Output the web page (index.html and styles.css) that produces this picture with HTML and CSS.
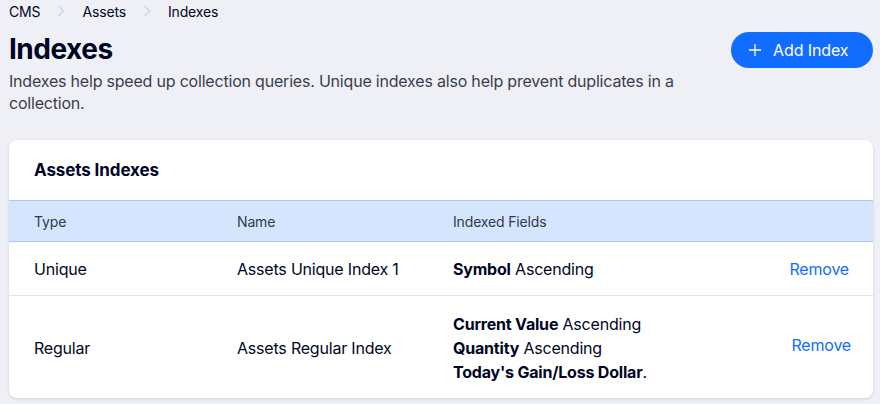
FILE: index.html
```html
<!DOCTYPE html>
<html lang="en">
<head>
    <meta charset="UTF-8">
    <meta name="viewport" content="width=device-width, initial-scale=1.0">
    <title>Indexes</title>
    <link rel="stylesheet" href="styles.css">
</head>
<body>
    <div class="page">
        <nav class="breadcrumbs">
            <span class="crumb">CMS</span>
            <svg class="chevron" width="8" height="14" viewBox="0 0 8 14"><path d="M1.5 2 L6.5 7 L1.5 12" fill="none" stroke="#b6bdcb" stroke-width="1"/></svg>
            <span class="crumb">Assets</span>
            <svg class="chevron" width="8" height="14" viewBox="0 0 8 14"><path d="M1.5 2 L6.5 7 L1.5 12" fill="none" stroke="#b6bdcb" stroke-width="1"/></svg>
            <span class="crumb current">Indexes</span>
        </nav>

        <div class="page-header">
            <div class="header-text">
                <h1 class="title">Indexes</h1>
                <p class="subtitle">Indexes help speed up collection queries. Unique indexes also help prevent duplicates in a collection.</p>
            </div>
            <button class="add-btn">
                <svg width="14" height="14" viewBox="0 0 14 14"><path d="M7 1 V13 M1 7 H13" stroke="#fff" stroke-width="1.3" fill="none"/></svg>
                <span>Add Index</span>
            </button>
        </div>

        <div class="card">
            <div class="card-title">Assets Indexes</div>
            <div class="table">
                <div class="row head">
                    <div class="cell">Type</div>
                    <div class="cell">Name</div>
                    <div class="cell">Indexed Fields</div>
                    <div class="cell"></div>
                </div>
                <div class="row">
                    <div class="cell">Unique</div>
                    <div class="cell">Assets Unique Index 1</div>
                    <div class="cell fields">
                        <div><b>Symbol</b> Ascending</div>
                    </div>
                    <div class="cell action"><a class="remove">Remove</a></div>
                </div>
                <div class="row tall">
                    <div class="cell">Regular</div>
                    <div class="cell">Assets Regular Index</div>
                    <div class="cell fields">
                        <div><b>Current Value</b> Ascending</div>
                        <div><b>Quantity</b> Ascending</div>
                        <div><b>Today's Gain/Loss Dollar</b>.</div>
                    </div>
                    <div class="cell action"><a class="remove">Remove</a></div>
                </div>
            </div>
        </div>
    </div>
</body>
</html>
```

FILE: styles.css
```css
body {
    margin: 0;
    padding: 0;
    background-color: #eef0f5;
    font-family: Inter, "Noto Sans", sans-serif;
    color: #000624;
    width: 880px;
    height: 404px;
    overflow: hidden;
}

.page {
    padding: 0 7px 0 9px;
}

.breadcrumbs {
    display: flex;
    align-items: center;
    height: 22px;
    font-size: 14px;
    letter-spacing: -0.15px;
    color: #000624;
}

.chevron {
    margin: 0 17px 0 17px;
}

.page-header {
    display: flex;
    justify-content: space-between;
    align-items: flex-start;
    margin-top: 9px;
}

.title {
    margin: 0;
    font-size: 28px;
    line-height: 36px;
    font-weight: 700;
    letter-spacing: -0.5px;
}

.subtitle {
    margin: 3px 0 0;
    width: 690px;
    font-size: 16px;
    line-height: 22px;
    letter-spacing: -0.2px;
    color: #3b3d4e;
}

.add-btn {
    display: flex;
    align-items: center;
    gap: 11px;
    width: 142px;
    height: 36px;
    margin-top: 1px;
    padding: 0 0 0 17px;
    border: none;
    border-radius: 18px;
    background-color: #116dff;
    color: #fff;
    font-family: Inter, "Noto Sans", sans-serif;
    font-size: 16px;
    letter-spacing: -0.1px;
}

.card {
    margin-top: 26px;
    background-color: #fff;
    border-radius: 8px;
    box-shadow: 0 1px 3px rgba(22, 45, 61, 0.15);
    overflow: hidden;
}

.card-title {
    height: 60px;
    line-height: 60px;
    padding-left: 25px;
    font-size: 17px;
    font-weight: 700;
    letter-spacing: -0.1px;
}

.row {
    display: grid;
    grid-template-columns: 203px 216px 1fr 120px;
    align-items: center;
    padding: 0 24px 0 25px;
    border-bottom: 1px solid #dfe5eb;
    font-size: 16px;
    letter-spacing: -0.2px;
    color: #000624;
    min-height: 53px;
}

.row.head {
    min-height: 40px;
    background-color: #d5e5fd;
    border-top: 1px solid #a8c9fb;
    border-bottom: 1px solid #a8c9fb;
    font-size: 14px;
    letter-spacing: -0.15px;
    color: #333853;
}

.row.tall {
    padding-top: 16px;
    padding-bottom: 14px;
    min-height: 0;
    border-bottom: none;
}

.row.tall .action {
    margin-right: -2px;
    margin-bottom: 6px;
}

.fields {
    line-height: 24px;
}

.fields b {
    font-weight: 700;
}

.action {
    text-align: right;
}

.remove {
    color: #116dff;
    cursor: pointer;
}
```
